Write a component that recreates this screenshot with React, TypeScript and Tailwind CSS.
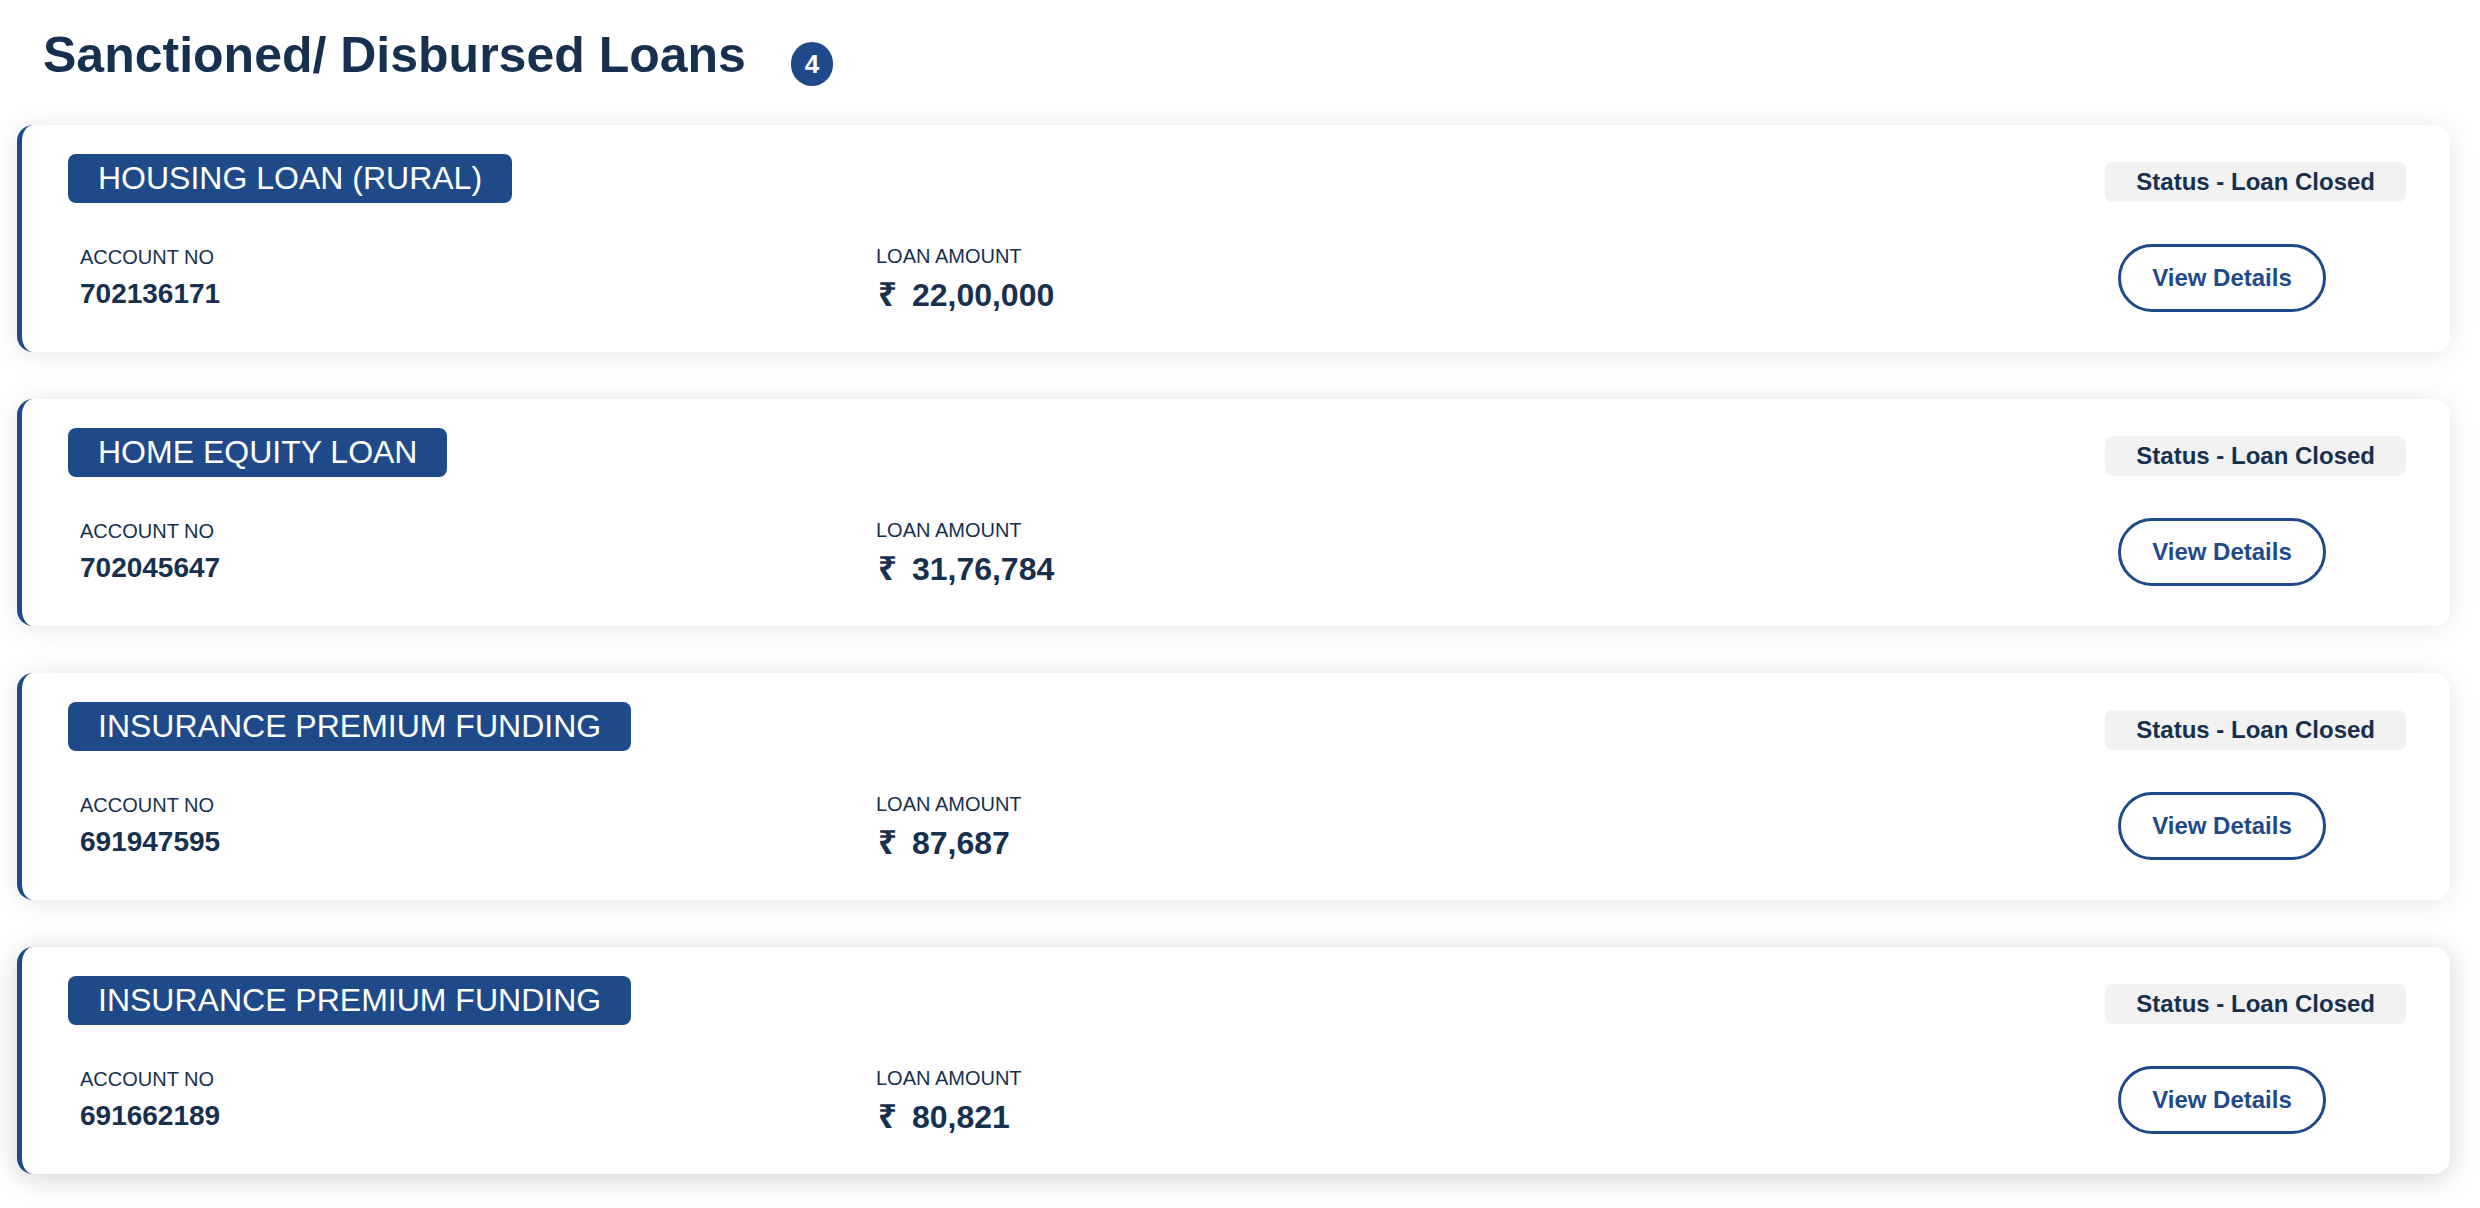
import React from "react";

type Loan = { name: string; account: string; amount: string; hovered?: boolean };

const loans: Loan[] = [
  { name: "HOUSING LOAN (RURAL)", account: "702136171", amount: "22,00,000" },
  { name: "HOME EQUITY LOAN", account: "702045647", amount: "31,76,784" },
  { name: "INSURANCE PREMIUM FUNDING", account: "691947595", amount: "87,687" },
  { name: "INSURANCE PREMIUM FUNDING", account: "691662189", amount: "80,821", hovered: true },
];

function LoanCard({ loan }: { loan: Loan }) {
  return (
    <div
      className={
        "bg-white rounded-2xl border-l-[5px] border-[#1f4a8a] pl-[46px] pr-[44px] pt-[29px] pb-[40px] " +
        (loan.hovered
          ? "shadow-[0_4px_28px_rgba(0,0,0,0.18)]"
          : "shadow-[0_2px_28px_rgba(0,0,0,0.1)]")
      }
    >
      <div className="flex items-start justify-between">
        <div className="h-[49px] flex items-center px-[30px] rounded-lg bg-[#1f4a8a] text-white text-[32px] leading-[49px] font-normal">
          {loan.name}
        </div>
        <div className="mt-[8px] h-[40px] flex items-center px-[31px] rounded-lg bg-[#f2f2f3] text-[#17304f] text-[24px] font-bold leading-[40px]">
          Status - Loan Closed
        </div>
      </div>
      <div className="mt-[41px] h-[68px] flex items-center pl-[12px]">
        <div className="w-[796px] flex flex-col">
          <div className="text-[20px] leading-[24px] text-[#17304f]">ACCOUNT NO</div>
          <div className="mt-[8px] text-[28px] leading-[34px] font-bold text-[#17304f]">{loan.account}</div>
        </div>
        <div className="flex-1 flex flex-col">
          <div className="text-[20px] leading-[24px] text-[#17304f]">LOAN AMOUNT</div>
          <div className="mt-[8px] flex items-baseline text-[32px] leading-[36px] font-bold text-[#17304f]">
            <span className="ml-[2px] mr-[15px] font-['Noto_Sans','DejaVu_Sans',sans-serif] text-[33px] leading-[36px] font-bold">₹</span>
            <span>{loan.amount}</span>
          </div>
        </div>
        <button className="mr-[80px] w-[208px] h-[68px] rounded-full border-[3px] border-[#1f4a8a] bg-white text-[#1f4a8a] text-[24px] font-bold flex items-center justify-center">
          View Details
        </button>
      </div>
    </div>
  );
}

export default function App() {
  return (
    <div className="min-h-screen bg-white font-['Liberation_Sans',Arial,sans-serif] pb-[34px]">
      <div className="flex items-start pt-[30px] pl-[43px]">
        <h1 className="text-[50px] leading-[50px] font-bold text-[#17304f]">Sanctioned/ Disbursed Loans</h1>
        <div className="ml-[45px] mt-[12px] w-[42px] h-[44px] rounded-full bg-[#1f4a8a] text-white text-[26px] font-bold flex items-center justify-center">
          4
        </div>
      </div>
      <div className="mt-[39px] ml-[17px] mr-[30px] flex flex-col gap-[47px]">
        {loans.map((l, i) => (
          <LoanCard key={i} loan={l} />
        ))}
      </div>
    </div>
  );
}
